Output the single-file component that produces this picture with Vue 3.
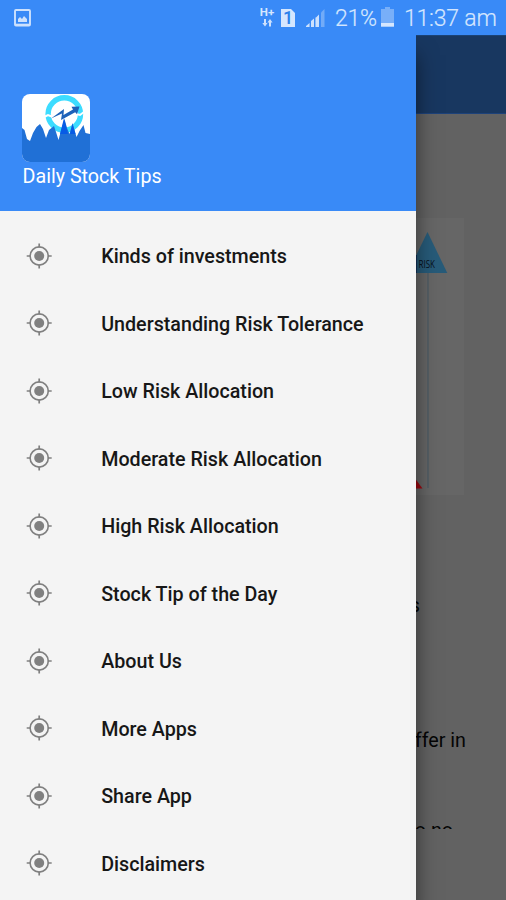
<script setup>
const items = [
  'Kinds of investments',
  'Understanding Risk Tolerance',
  'Low Risk Allocation',
  'Moderate Risk Allocation',
  'High Risk Allocation',
  'Stock Tip of the Day',
  'About Us',
  'More Apps',
  'Share App',
  'Disclaimers',
]
</script>

<template>
  <div class="screen">
    <header class="status">
      <svg class="picture" width="18" height="18" viewBox="0 0 18 18">
        <rect x="1" y="1" width="15" height="15.5" rx="1" fill="none" stroke="#cde1fd" stroke-width="1.9" />
        <path d="M4 13V10l2-2 2 2 2-3 3 3v3z" fill="#cde1fd" />
        <path d="M1 15.8h15" stroke="#cde1fd" stroke-width="2.2" />
      </svg>
      <div class="indicators">
        <div class="network">
          <span>H+</span>
          <svg width="11" height="8" viewBox="0 0 11 8">
            <path d="M2 0h2v4h1.5L3 7.6.3 4H2zM7 7.6h2V3.6h1.6L8 0 5.4 3.6H7z" fill="#cde1fd" />
          </svg>
        </div>
        <div class="sim">1</div>
        <svg class="signal" width="20" height="20" viewBox="0 0 20 20">
          <path d="M0 19v-1l3-2.5V19zM5 19v-6l3-2.4V19zM10 19V9.5l3-3V19z" fill="#cde1fd" />
          <path d="M4 14.7l-1 .8V19h1zM9 19v-9l1-1v10z" fill="#8bbafa" />
          <path d="M15 19V4.5L18.5 1v18z" fill="#72abf8" />
        </svg>
        <span class="percent">21%</span>
        <svg class="battery" width="13" height="20" viewBox="0 0 13 20">
          <path d="M0 2h4V0h5v2h4v18H0z" fill="#78aff9" />
          <path d="M0 16h13v3.5H0z" fill="#d5e6fe" />
        </svg>
        <span class="clock">11:37 am</span>
      </div>
    </header>

    <main class="body">
      <section class="page">
        <div class="appbar"></div>
        <div class="article">
          <svg class="diagram" width="422" height="277" viewBox="42 0 422 277">
            <rect x="42" width="422" height="277" fill="#666" />
            <path d="M428 55V270" stroke="#4d5b64" stroke-width="1.3" />
            <path d="M427.5 14L447.3 55H407.6z" fill="#275b79" />
            <path d="M412 37h4.5v18H412z" fill="#000a3a" />
            <text x="418.5" y="49.5" class="risk" textLength="16.5" lengthAdjust="spacingAndGlyphs">RISK</text>
            <path d="M408 251L422.5 270.5H400z" fill="#9b0810" />
          </svg>
          <p class="line first">investment options</p>
          <p class="line second">differ in</p>
          <p class="line third">to no</p>
        </div>
      </section>

      <aside class="drawer">
        <div class="profile">
          <svg class="logo" width="68" height="68" viewBox="0 0 68 68">
            <defs>
              <clipPath id="tile"><rect width="68" height="68" rx="8" /></clipPath>
            </defs>
            <g clip-path="url(#tile)">
              <rect width="68" height="68" fill="#fff" />
              <circle cx="42.3" cy="20" r="16.2" fill="none" stroke="#3ddcff" stroke-width="5.4" />
              <path d="M22 23l4-2 5 2M54 20l4 1 4-3" fill="none" stroke="#fff" stroke-width="2" />
              <path d="M29 24.5L42 15l-.5 6L51 15.5l-1.5-2.7 8-.3-2.5 7.8-1.8-2L39 26l1-6.5z" fill="#1d61b9" />
              <path d="M0 34l2.5 2L5 45l3 2 3-8 3.500-6 3.500-3 3 5 3 9 3-8 5-4 2 6 2.500 8 3-11 3-10 2.500 9 2.500 6 3-11 4 14 3-6 4-6 2 8 5 1v28H0z" fill="#2070d6" />
              <path d="M38 40l4-16 4 16zM48 40l2.500-10 3 10z" fill="#075be5" />
            </g>
          </svg>
          <div class="name">Daily Stock Tips</div>
        </div>
        <nav class="menu">
          <a v-for="item in items" :key="item" class="item">
            <svg class="target" width="26" height="26" viewBox="0 0 26 26">
              <circle cx="13.2" cy="13" r="9.1" fill="none" stroke="#808080" stroke-width="1.6" />
              <circle cx="13.2" cy="13" r="5" fill="#808080" />
              <path d="M13.2 .5v4M13.2 21.5v4M.7 13h4M21.700 13h4" stroke="#808080" stroke-width="1.7" />
            </svg>
            <span class="label">{{ item }}</span>
          </a>
        </nav>
      </aside>
    </main>
  </div>
</template>

<style>
body { margin: 0; }
</style>

<style scoped>
.screen {
  display: flex;
  flex-direction: column;
  width: 506px;
  height: 900px;
  overflow: hidden;
  background: #626262;
  font-family: Roboto, sans-serif;
}
.status {
  display: flex;
  flex: none;
  box-sizing: border-box;
  height: 35px;
  justify-content: space-between;
  background: #398af7;
  color: #d5e6fe;
  padding: 0 9px 0 14px;
}
.picture { margin-top: 9px; }
.indicators { display: flex; align-items: flex-start; }
.network {
  display: flex;
  flex-direction: column;
  align-items: center;
  width: 14px;
  margin: 7px 7px 0 0;
  font-size: 11.5px;
  font-weight: 700;
  line-height: 11px;
}
.network svg { margin-top: 1px; }
.sim {
  width: 14px;
  height: 18px;
  margin-top: 9px;
  background: #d5e6fe;
  color: #2d7feb;
  font-size: 18px;
  font-weight: 500;
  line-height: 18px;
  text-align: center;
  clip-path: polygon(0 0, 10px 0, 100% 4px, 100% 100%, 0 100%);
}
.signal { margin: 8px 0 0 11px; }
.percent, .clock {
  font-size: 23px;
  font-weight: 300;
  line-height: 36px;
  margin-top: 1px;
  white-space: nowrap;
  -webkit-text-stroke: .2px #d5e6fe;
}
.percent { width: 42px; margin-left: 9px; letter-spacing: -.3px; }
.battery { margin: 7px 0 0 4px; }
.clock { width: 93px; margin-left: 10px; letter-spacing: -.2px; }
.body { position: relative; flex: 1; display: flex; min-height: 0; }
.page { flex: 1; display: flex; flex-direction: column; }
.appbar {
  box-sizing: border-box;
  height: 79px;
  background: #183760;
  border-top: 1px solid #1b4376;
  border-bottom: 1px solid #1d427a;
}
.article { display: flex; flex-direction: column; padding: 104px 40px 0 42px; }
.diagram { display: block; }
.risk { font-family: "Open Sans", sans-serif; font-size: 10.5px; fill: #071019; }
.line {
  margin: 0;
  color: #050505;
  font-size: 19.7px;
  line-height: 26px;
  text-align: right;
  white-space: nowrap;
}
.first { margin-top: 98px; padding-right: 46px; }
.second { margin-top: 109px; }
.third { margin-top: 64px; padding-right: 13px; height: 11px; overflow: hidden; }
.drawer {
  position: absolute;
  top: 0;
  left: 0;
  bottom: 0;
  width: 416px;
  display: flex;
  flex-direction: column;
  background: #f4f4f4;
  box-shadow: 0 20px 20px rgba(0, 0, 0, .5);
  clip-path: inset(0 -30px 0 0);
}
.profile {
  box-sizing: border-box;
  height: 176px;
  padding: 59px 22px 0;
  background: #398af7;
}
.logo { display: block; }
.name { margin-top: 1px; padding-left: .5px; color: #fff; font-size: 19.7px; line-height: 27px; }
.menu { padding-top: 11px; }
.item {
  display: flex;
  align-items: center;
  height: 67.5px;
  padding-left: 26px;
  gap: 49.2px;
  color: #171717;
  font-size: 19.7px;
  font-weight: 500;
  white-space: nowrap;
}
.target { flex: none; }
.label { padding-top: 1.5px; }
</style>
